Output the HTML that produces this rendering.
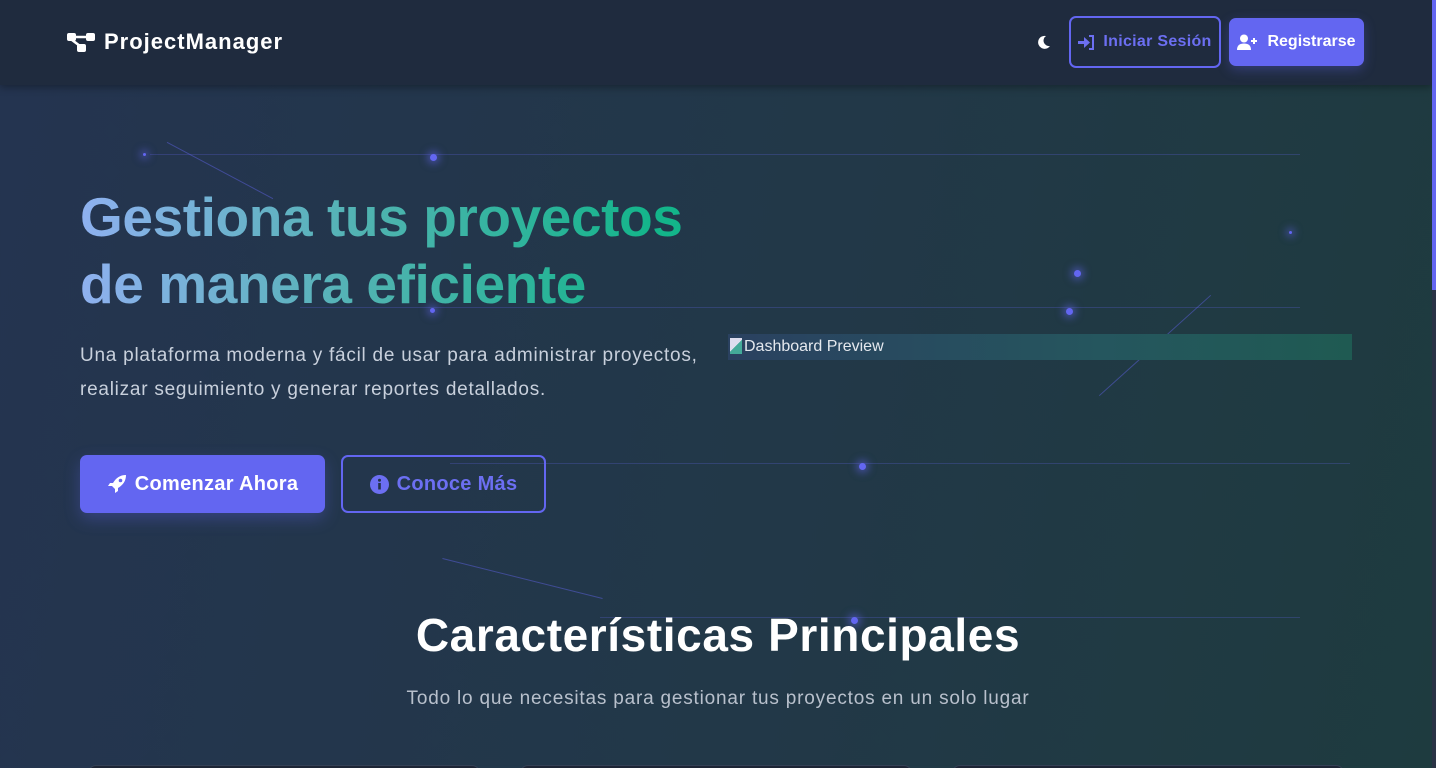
<!DOCTYPE html>
<html><head><meta charset="utf-8"><style>
*{margin:0;padding:0;box-sizing:border-box}
html{overflow:hidden;width:1436px;height:768px}
body{width:1436px;height:768px;overflow:hidden;font-family:"Liberation Sans",sans-serif;background:linear-gradient(100deg,#243450 0%,#223848 55%,#1e3b3f 100%);position:relative;color:#fff}
.nav{position:absolute;left:0;top:0;width:1432px;height:85px;background:#1f2b3e;box-shadow:0 2px 8px rgba(0,0,0,.35)}
.logo{position:absolute;left:67px;top:29px;font-weight:bold;font-size:22px;letter-spacing:1px;display:flex;align-items:center;gap:8px}
.btn{position:absolute;border-radius:7px;font-weight:bold;display:flex;align-items:center;justify-content:center;gap:8px}
.sb{position:absolute;right:0;top:0;width:4px;height:768px;background:#2a3345}
.sb i{position:absolute;left:0;top:0;width:4px;height:290px;background:#6366f1}
h1{position:absolute;left:80px;top:184px;font-size:55px;line-height:67px;letter-spacing:-0.4px;font-weight:bold;background:linear-gradient(90deg,#8fb1f0 0%,#4fb3b0 45%,#13b58a 90%);-webkit-background-clip:text;background-clip:text;color:transparent;width:640px}
.sub{position:absolute;left:80px;top:339px;font-size:19px;line-height:34px;color:#c8d0dc;letter-spacing:0.75px}
.dot{position:absolute;width:7px;height:7px;border-radius:50%;background:#6366f1;box-shadow:0 0 8px 3px rgba(99,102,241,.5)}
.line{position:absolute;height:1px;background:rgba(99,102,241,.25)}
.card{position:absolute;top:765px;height:20px;width:392px;background:#1d2535;border-radius:8px;border:1px solid #344055}
</style></head><body>
<div class="line" style="left:150px;top:154px;width:1150px"></div>
<div class="line" style="left:300px;top:307px;width:1000px"></div>
<div class="line" style="left:450px;top:463px;width:900px"></div>
<div class="line" style="left:600px;top:617px;width:700px"></div>
<div class="line" style="left:160px;top:170px;width:120px;transform:rotate(28deg);background:rgba(99,102,241,.45)"></div>
<div class="line" style="left:1080px;top:345px;width:150px;transform:rotate(-42deg);background:rgba(99,102,241,.45)"></div>
<div class="line" style="left:440px;top:578px;width:165px;transform:rotate(14deg);background:rgba(99,102,241,.45)"></div>
<div class="dot" style="left:430px;top:154px"></div>
<div class="dot" style="left:1074px;top:270px"></div>
<div class="dot" style="left:1066px;top:308px"></div>
<div class="dot" style="left:859px;top:463px"></div>
<div class="dot" style="left:851px;top:617px"></div>
<div class="dot" style="left:143px;top:153px;width:3px;height:3px"></div>
<div class="dot" style="left:1289px;top:231px;width:3px;height:3px"></div>
<div class="dot" style="left:430px;top:308px;width:5px;height:5px"></div>

<div class="nav">
 <div class="logo"><svg width="29" height="22" viewBox="0 0 29 22"><rect x="0" y="2" width="9" height="8" rx="2" fill="#fff"/><rect x="19" y="2" width="9" height="8" rx="2" fill="#fff"/><rect x="10" y="13" width="9" height="8" rx="2" fill="#fff"/><path d="M8 6H20M5 9L13 15" stroke="#fff" stroke-width="2.5"/></svg>ProjectManager</div>
 <svg style="position:absolute;left:1037px;top:35px" width="14" height="14" viewBox="0 0 14 14"><path d="M9 1A6.5 6.5 0 1 0 13 11A5.5 5.5 0 0 1 9 1Z" fill="#fff"/></svg>
 <div class="btn" style="left:1069px;top:16px;width:152px;height:52px;border:2px solid #6366f1;color:#6c6ff2;font-size:16px;letter-spacing:0.3px"><svg width="17" height="15" viewBox="0 0 17 15"><path d="M0 6H6V2L12 7.5L6 13V9H0Z" fill="#6c6ff2"/><path d="M11 1H15V14H11" stroke="#6c6ff2" stroke-width="2" fill="none"/></svg>Iniciar Sesión</div>
 <div class="btn" style="left:1229px;top:18px;width:135px;height:48px;background:#6366f1;color:#fff;font-size:16px;box-shadow:0 4px 12px rgba(99,102,241,.3)"><svg width="22" height="16" viewBox="0 0 22 16"><circle cx="7" cy="4.5" r="4" fill="#fff"/><path d="M0 16C0 11 3 9.5 7 9.5S14 11 14 16Z" fill="#fff"/><path d="M17 4V10M14 7H20" stroke="#fff" stroke-width="2"/></svg>Registrarse</div>
</div>
<div class="sb"><i></i></div>

<h1>Gestiona tus proyectos<br>de manera eficiente</h1>
<div class="sub">Una plataforma moderna y fácil de usar para administrar proyectos,<br>realizar seguimiento y generar reportes detallados.</div>

<div class="btn" style="left:80px;top:455px;width:245px;height:58px;background:#6366f1;font-size:20px;letter-spacing:0.3px;box-shadow:0 6px 16px rgba(99,102,241,.3)"><svg width="20" height="20" viewBox="0 0 20 20"><path d="M19 1C13 1 9 4 6 9L3 9L1 12L5 12L8 15L8 19L11 17L11 14C16 11 19 7 19 1Z" fill="#fff"/><circle cx="13.5" cy="6.5" r="1.8" fill="#6366f1"/></svg>Comenzar Ahora</div>
<div class="btn" style="left:341px;top:455px;width:205px;height:58px;border:2px solid #6366f1;color:#6c6ff2;font-size:20px;letter-spacing:0.3px"><svg width="19" height="19" viewBox="0 0 19 19"><circle cx="9.5" cy="9.5" r="9.5" fill="#6c6ff2"/><rect x="8.2" y="8" width="2.6" height="6.5" fill="#233349"/><circle cx="9.5" cy="5.2" r="1.5" fill="#233349"/></svg>Conoce Más</div>

<div style="position:absolute;left:728px;top:334px;width:624px;height:26px;background:linear-gradient(90deg,#2a4160,#25565e 60%,#1f5a52);font-size:16px;line-height:26px;color:#e4e8ee;padding-left:16px">Dashboard Preview</div>
<div style="position:absolute;left:730px;top:338px;width:12px;height:16px;background:linear-gradient(135deg,#dde 50%,#4a9 50%)"></div>

<div style="position:absolute;left:0;width:1436px;top:608px;text-align:center;font-size:46px;font-weight:bold;letter-spacing:0.6px">Características Principales</div>
<div style="position:absolute;left:0;width:1436px;top:688px;text-align:center;font-size:19px;color:#b8c0cc;letter-spacing:0.8px">Todo lo que necesitas para gestionar tus proyectos en un solo lugar</div>
<div class="card" style="left:88px"></div><div class="card" style="left:520px"></div><div class="card" style="left:952px"></div>
</body></html>
